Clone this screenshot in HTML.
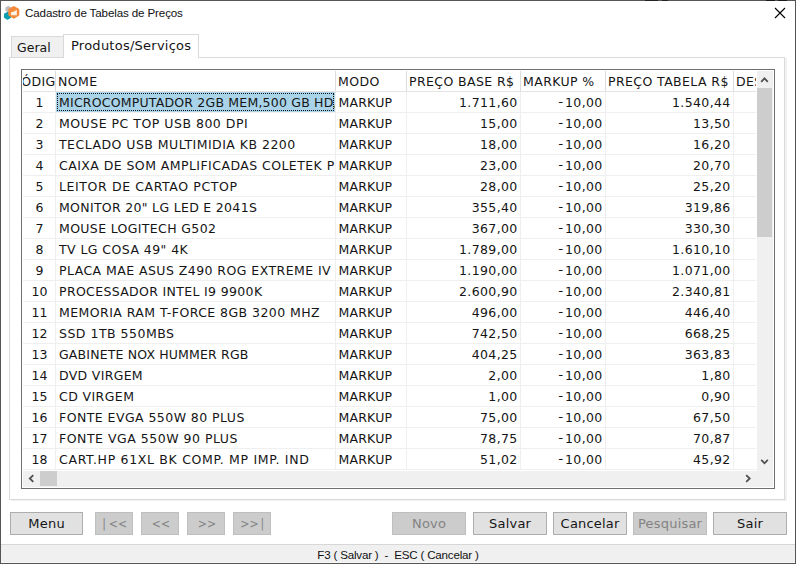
<!DOCTYPE html>
<html lang="pt-BR"><head><meta charset="utf-8"><title>Cadastro de Tabelas de Preços</title>
<style>
*{box-sizing:border-box;margin:0;padding:0}
html,body{width:796px;height:564px;overflow:hidden;background:#fff}
body{position:relative;font-family:"DejaVu Sans","Liberation Sans",sans-serif;font-size:12.5px;color:#151515;-webkit-font-smoothing:antialiased}
.abs{position:absolute}
#win{position:absolute;left:0;top:0;width:796px;height:564px;border:1px solid #555;background:#fff}
#title{position:absolute;left:25px;top:4px;height:18px;line-height:18px;font-family:"Liberation Sans","DejaVu Sans",sans-serif;font-size:11.6px;letter-spacing:-0.13px;white-space:nowrap;color:#111}
#close{position:absolute;left:774px;top:7px;width:12px;height:12px}
#icon{position:absolute;left:3px;top:5px;width:18px;height:16px}
.tab{position:absolute;border:1px solid #d9d9d9;white-space:nowrap}
#tab1{left:11px;top:36px;width:53px;height:22px;background:#f0f0f0}
#tab2{left:63px;top:34px;width:136px;height:24px;background:#fff;border-bottom:none}
.tab span{font-size:13px;letter-spacing:.25px}
.tab span{position:absolute;white-space:nowrap}
#pane{position:absolute;left:9px;top:57px;width:776px;height:443px;border:1px solid #dadada;background:#fff;box-shadow:2px 1px 0 #f1f1f1}
#grid{position:absolute;left:21px;top:69px;width:754px;height:420px;border:1px solid #707070;background:#fff;overflow:hidden}
#gc{position:absolute;left:-22px;top:-70px;width:796px;height:564px}
.h{position:absolute;top:71px;height:20px;line-height:22px;white-space:nowrap;overflow:hidden;padding-left:2px;letter-spacing:.4px;border-right:1px solid #dcdcdc}
#hline{position:absolute;left:23px;top:91px;width:733px;height:1px;background:#e4e4e4}
.r{position:absolute;left:0;width:756px;height:21px}
.r::after{content:"";position:absolute;left:23px;right:0;top:20px;height:1px;background:#efefef}
.c{position:absolute;top:0;height:20px;line-height:21px;white-space:nowrap;overflow:hidden;border-right:1px solid #efefef}
.c1{left:23px;width:33px;text-align:center;padding-left:1px}
.c2{left:56px;width:280px;padding-left:3px}
.c3{left:336px;width:71px;padding-left:2.5px;letter-spacing:.2px}
.c4{left:407px;width:114px;text-align:right;padding-right:2.3px;letter-spacing:.38px}
.c5{left:521px;width:85px;text-align:right;padding-right:2.3px;letter-spacing:.38px}
.c5 i{font-style:normal;letter-spacing:0;display:inline-block;transform:translate(.3px,-.7px) scaleX(1.1);transform-origin:0 50%;margin-right:2.4px}
.c6{left:606px;width:128px;text-align:right;padding-right:2.3px;letter-spacing:.38px}
.sel{background:#a9d3e8}
.sel::before{content:"";position:absolute;left:1px;top:1px;right:1px;bottom:1px;border:1px dotted #111}
.btn{position:absolute;top:512px;height:23px;width:73px;border:1px solid #adadad;background:#e1e1e1;text-align:center;line-height:21px;white-space:nowrap;font-size:13px;letter-spacing:.2px;padding-left:.2px}
.w{width:74px}
.dis{background:#cccccc;border-color:#bfbfbf;color:#838383}
.nav{width:38px;letter-spacing:0;padding-left:2px}
.nv{display:inline-block;transform:scaleX(.84)}
.nv i{font-style:normal;letter-spacing:3.2px}
.nv b{font-weight:normal;letter-spacing:2.2px}
#sbsep{position:absolute;left:1px;top:544px;width:794px;height:1px;background:#d7d7d7}
#sb{position:absolute;left:1px;top:545px;width:794px;height:18px;border-bottom:1px solid #f8f8f8;background:#f0f0f0;text-align:center;font-family:"Liberation Sans","DejaVu Sans",sans-serif;font-size:11.6px;line-height:20px;white-space:pre;letter-spacing:-0.2px;padding-left:0px;overflow:hidden;color:#111}
.sc{position:absolute;background:#f0f0f0}
.th{position:absolute;background:#cdcdcd}
</style></head><body>
<div id="win"></div>
<div class="abs" style="left:645px;top:0;width:13px;height:1px;background:#222"></div><div class="abs" style="left:662px;top:0;width:6px;height:1px;background:#222"></div><div class="abs" style="left:766px;top:0;width:9px;height:1px;background:#1a1a1a"></div><div class="abs" style="left:778px;top:0;width:9px;height:1px;background:#1a1a1a"></div>
<svg id="icon" viewBox="3 5 18 16">
<polygon points="8.3,6.4 10.6,7.7 10.6,10.4 8.3,11.7 6.0,10.4 6.0,7.7" fill="#bdbdbd" stroke="#bdbdbd" stroke-width="1.2" stroke-linejoin="round"/>
<polygon points="7.5,12.6 10.3,14.2 10.3,17.5 7.5,19.1 4.7,17.5 4.7,14.2" fill="#0c9fb2" stroke="#0c9fb2" stroke-width="1.4" stroke-linejoin="round"/>
<polygon points="13.8,7.2 18.2,9.7 18.2,14.9 13.8,17.5 9.4,14.9 9.4,9.7" fill="#f58a3a" stroke="#f58a3a" stroke-width="2.2" stroke-linejoin="round"/>
<polygon points="11.1,15.2 16.8,15.2 16.8,9.9 15.7,9.9 15.7,10.7 14.5,10.7 14.5,11.4 13.3,11.4 13.3,12.1 11.1,12.1" fill="#fff3e6"/>
</svg>
<div id="title">Cadastro de Tabelas de Preços</div>
<svg id="close" viewBox="0 0 12 12"><path d="M1 1 L11 11 M11 1 L1 11" stroke="#000" stroke-width="1.1" fill="none"/></svg>

<div id="pane"></div>
<div class="tab" id="tab1"><span style="left:5px;top:2px;line-height:18px;font-size:12.5px;letter-spacing:0">Geral</span></div>
<div class="tab" id="tab2"><span style="left:7px;top:2px;line-height:18px">Produtos/Serviços</span></div>

<div id="grid"><div id="gc">
<div class="h" style="left:23px;width:33px;padding-left:0;text-align:center"><span style="display:inline-block;margin:0 -20px">CÓDIGO</span></div>
<div class="h" style="left:56px;width:280px">NOME</div>
<div class="h" style="left:336px;width:71px">MODO</div>
<div class="h" style="left:407px;width:114px">PREÇO BASE R$</div>
<div class="h" style="left:521px;width:85px">MARKUP %</div>
<div class="h" style="left:606px;width:128px">PREÇO TABELA R$</div>
<div class="h" style="left:734px;width:22px;border-right:none">DESCONTO</div>
<div id="hline"></div>
<div class="r" style="top:92px"><div class="c c1">1</div><div class="c c2 sel"><span style="letter-spacing:0.203px">MICROCOMPUTADOR 2GB MEM,500 GB HD,</span></div><div class="c c3">MARKUP</div><div class="c c4">1.711,60</div><div class="c c5"><i>-</i>10,00</div><div class="c c6">1.540,44</div></div>
<div class="r" style="top:113px"><div class="c c1">2</div><div class="c c2"><span style="letter-spacing:0.500px">MOUSE PC TOP USB 800 DPI</span></div><div class="c c3">MARKUP</div><div class="c c4">15,00</div><div class="c c5"><i>-</i>10,00</div><div class="c c6">13,50</div></div>
<div class="r" style="top:134px"><div class="c c1">3</div><div class="c c2"><span style="letter-spacing:0.472px">TECLADO USB MULTIMIDIA KB 2200</span></div><div class="c c3">MARKUP</div><div class="c c4">18,00</div><div class="c c5"><i>-</i>10,00</div><div class="c c6">16,20</div></div>
<div class="r" style="top:155px"><div class="c c1">4</div><div class="c c2"><span style="letter-spacing:0.438px">CAIXA DE SOM AMPLIFICADAS COLETEK PRETA</span></div><div class="c c3">MARKUP</div><div class="c c4">23,00</div><div class="c c5"><i>-</i>10,00</div><div class="c c6">20,70</div></div>
<div class="r" style="top:176px"><div class="c c1">5</div><div class="c c2"><span style="letter-spacing:0.605px">LEITOR DE CARTAO PCTOP</span></div><div class="c c3">MARKUP</div><div class="c c4">28,00</div><div class="c c5"><i>-</i>10,00</div><div class="c c6">25,20</div></div>
<div class="r" style="top:197px"><div class="c c1">6</div><div class="c c2"><span style="letter-spacing:0.308px">MONITOR 20&quot; LG LED E 2041S</span></div><div class="c c3">MARKUP</div><div class="c c4">355,40</div><div class="c c5"><i>-</i>10,00</div><div class="c c6">319,86</div></div>
<div class="r" style="top:218px"><div class="c c1">7</div><div class="c c2"><span style="letter-spacing:0.356px">MOUSE LOGITECH G502</span></div><div class="c c3">MARKUP</div><div class="c c4">367,00</div><div class="c c5"><i>-</i>10,00</div><div class="c c6">330,30</div></div>
<div class="r" style="top:239px"><div class="c c1">8</div><div class="c c2"><span style="letter-spacing:0.431px">TV LG COSA 49&quot; 4K</span></div><div class="c c3">MARKUP</div><div class="c c4">1.789,00</div><div class="c c5"><i>-</i>10,00</div><div class="c c6">1.610,10</div></div>
<div class="r" style="top:260px"><div class="c c1">9</div><div class="c c2"><span style="letter-spacing:0.442px">PLACA MAE ASUS Z490 ROG EXTREME IV</span></div><div class="c c3">MARKUP</div><div class="c c4">1.190,00</div><div class="c c5"><i>-</i>10,00</div><div class="c c6">1.071,00</div></div>
<div class="r" style="top:281px"><div class="c c1">10</div><div class="c c2"><span style="letter-spacing:0.340px">PROCESSADOR INTEL I9 9900K</span></div><div class="c c3">MARKUP</div><div class="c c4">2.600,90</div><div class="c c5"><i>-</i>10,00</div><div class="c c6">2.340,81</div></div>
<div class="r" style="top:302px"><div class="c c1">11</div><div class="c c2"><span style="letter-spacing:0.435px">MEMORIA RAM T-FORCE 8GB 3200 MHZ</span></div><div class="c c3">MARKUP</div><div class="c c4">496,00</div><div class="c c5"><i>-</i>10,00</div><div class="c c6">446,40</div></div>
<div class="r" style="top:323px"><div class="c c1">12</div><div class="c c2"><span style="letter-spacing:0.500px">SSD 1TB 550MBS</span></div><div class="c c3">MARKUP</div><div class="c c4">742,50</div><div class="c c5"><i>-</i>10,00</div><div class="c c6">668,25</div></div>
<div class="r" style="top:344px"><div class="c c1">13</div><div class="c c2"><span style="letter-spacing:0.159px">GABINETE NOX HUMMER RGB</span></div><div class="c c3">MARKUP</div><div class="c c4">404,25</div><div class="c c5"><i>-</i>10,00</div><div class="c c6">363,83</div></div>
<div class="r" style="top:365px"><div class="c c1">14</div><div class="c c2"><span style="letter-spacing:0.311px">DVD VIRGEM</span></div><div class="c c3">MARKUP</div><div class="c c4">2,00</div><div class="c c5"><i>-</i>10,00</div><div class="c c6">1,80</div></div>
<div class="r" style="top:386px"><div class="c c1">15</div><div class="c c2"><span style="letter-spacing:0.412px">CD VIRGEM</span></div><div class="c c3">MARKUP</div><div class="c c4">1,00</div><div class="c c5"><i>-</i>10,00</div><div class="c c6">0,90</div></div>
<div class="r" style="top:407px"><div class="c c1">16</div><div class="c c2"><span style="letter-spacing:0.445px">FONTE EVGA 550W 80 PLUS</span></div><div class="c c3">MARKUP</div><div class="c c4">75,00</div><div class="c c5"><i>-</i>10,00</div><div class="c c6">67,50</div></div>
<div class="r" style="top:428px"><div class="c c1">17</div><div class="c c2"><span style="letter-spacing:0.510px">FONTE VGA 550W 90 PLUS</span></div><div class="c c3">MARKUP</div><div class="c c4">78,75</div><div class="c c5"><i>-</i>10,00</div><div class="c c6">70,87</div></div>
<div class="r" style="top:449px"><div class="c c1">18</div><div class="c c2"><span style="letter-spacing:0.681px">CART.HP 61XL BK COMP. MP IMP. IND</span></div><div class="c c3">MARKUP</div><div class="c c4">51,02</div><div class="c c5"><i>-</i>10,00</div><div class="c c6">45,92</div></div>
<div class="sc" style="left:757px;top:71px;width:16px;height:416px"></div>
<div class="th" style="left:757px;top:88px;width:15px;height:149px"></div>
<div class="sc" style="left:23px;top:471px;width:750px;height:16px"></div>
<div class="th" style="left:40px;top:471px;width:17px;height:15px"></div>
<svg class="abs" style="left:757px;top:71px" width="16" height="17" viewBox="0 0 16 17"><path d="M4.2 10.8 L7.5 7.3 L10.8 10.8" stroke="#505050" stroke-width="1.8" fill="none"/></svg>
<svg class="abs" style="left:757px;top:453px" width="16" height="17" viewBox="0 0 16 17"><path d="M4.2 6.8 L7.5 10.3 L10.8 6.8" stroke="#505050" stroke-width="1.8" fill="none"/></svg>
<svg class="abs" style="left:23px;top:470px" width="17" height="17" viewBox="0 0 17 17"><path d="M10.3 5.2 L6.8 8.5 L10.3 11.8" stroke="#505050" stroke-width="1.8" fill="none"/></svg>
<svg class="abs" style="left:740px;top:470px" width="17" height="17" viewBox="0 0 17 17"><path d="M6.2 5.2 L9.7 8.5 L6.2 11.8" stroke="#505050" stroke-width="1.8" fill="none"/></svg>
</div></div>

<div class="btn" style="left:10px">Menu</div>
<div class="btn dis nav" style="left:95px"><span class="nv"><i>|</i>&lt;&lt;</span></div>
<div class="btn dis nav" style="left:141px"><span class="nv">&lt;&lt;</span></div>
<div class="btn dis nav" style="left:187px"><span class="nv">&gt;&gt;</span></div>
<div class="btn dis nav" style="left:233px;padding-left:0"><span class="nv">&gt;<b>&gt;</b>|</span></div>
<div class="btn dis w" style="left:392px">Novo</div>
<div class="btn w" style="left:473px">Salvar</div>
<div class="btn w" style="left:553px">Cancelar</div>
<div class="btn dis w" style="left:633px">Pesquisar</div>
<div class="btn w" style="left:713px">Sair</div>
<div id="sbsep"></div>
<div id="sb">F3 ( Salvar )  -  ESC ( Cancelar )</div>
</body></html>
